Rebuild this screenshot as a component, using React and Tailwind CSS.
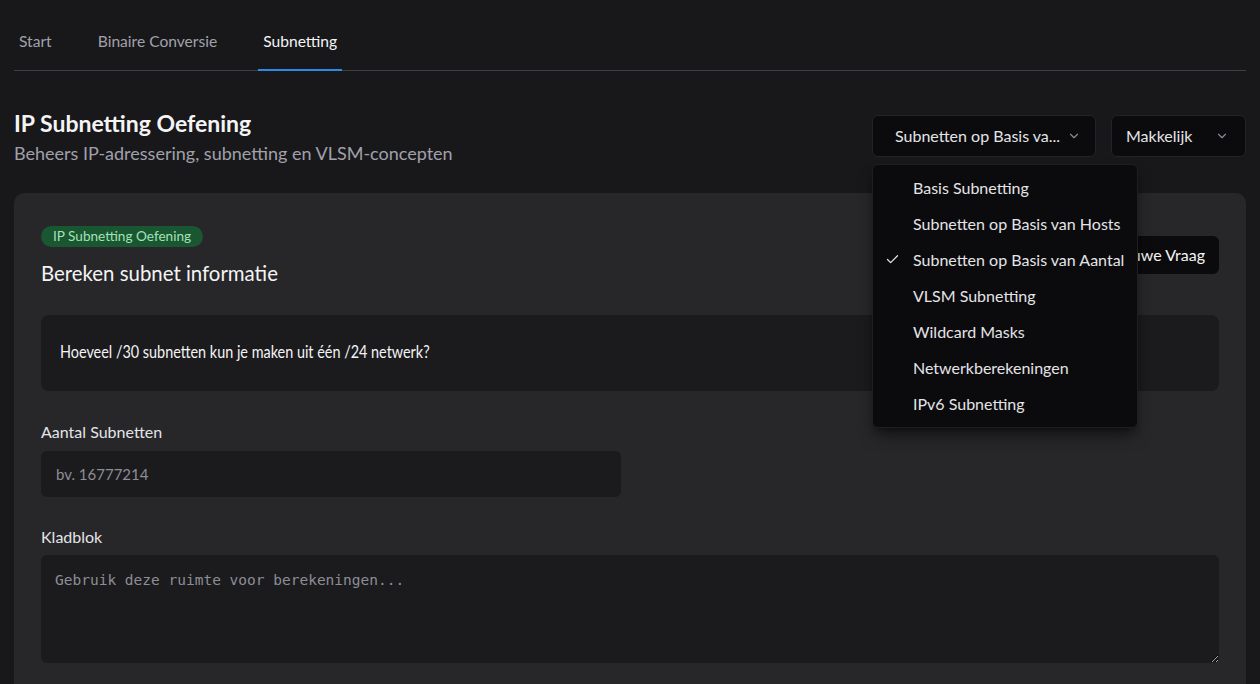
import React from "react";

const font = { fontFamily: "Lato, 'Noto Sans', sans-serif" };

function Chevron({ className = "" }) {
  return (
    <svg width="14" height="14" viewBox="0 0 24 24" fill="none" stroke="currentColor" strokeWidth="2" strokeLinecap="round" strokeLinejoin="round" className={className}>
      <path d="m6 9 6 6 6-6" />
    </svg>
  );
}

function Check() {
  return (
    <svg width="15" height="15" viewBox="0 0 24 24" fill="none" stroke="currentColor" strokeWidth="2" strokeLinecap="round" strokeLinejoin="round">
      <path d="M20 6 9 17l-5-5" />
    </svg>
  );
}

const items = [
  "Basis Subnetting",
  "Subnetten op Basis van Hosts",
  "Subnetten op Basis van Aantal",
  "VLSM Subnetting",
  "Wildcard Masks",
  "Netwerkberekeningen",
  "IPv6 Subnetting",
];

export default function App() {
  return (
    <div className="min-h-[684px] bg-[#18181b] text-[#f4f4f5] px-[14px]" style={font}>
      <nav className="flex gap-[36px] border-b border-[#3f3f46] pt-[30px]">
        <div className="px-[5px] pb-[18px] text-[15.6px] leading-[22px] text-[#a1a1aa]">Start</div>
        <div className="px-[5px] pb-[18px] text-[15.6px] leading-[22px] text-[#a1a1aa]">Binaire Conversie</div>
        <div className="-mb-px border-b-2 border-[#2b8ae8] px-[5px] pb-[17px] text-[15.6px] leading-[22px] text-[#f4f4f5]">Subnetting</div>
      </nav>

      <div className="mt-[38px] flex items-start justify-between">
        <div>
          <h1 className="text-[23px] font-bold leading-[28px] text-[#f4f4f5]">IP Subnetting Oefening</h1>
          <p className="mt-[2px] text-[18px] leading-[28px] text-[#a1a1aa]">Beheers IP-adressering, subnetting en VLSM-concepten</p>
        </div>
        <div className="relative mt-[6px] flex gap-[15px]">
          <button className="flex h-[42px] w-[224px] items-center justify-between rounded-md border border-[#232327] bg-[#0b0b0d] pl-[22px] pr-[14px] text-[16px] text-[#e4e4e7]">
            <span>Subnetten op Basis va...</span>
            <Chevron className="text-[#8a8a92]" />
          </button>
          <button className="flex h-[42px] w-[135px] items-center justify-between rounded-md border border-[#232327] bg-[#0b0b0d] pl-[14px] pr-[16px] text-[16px] text-[#e4e4e7]">
            <span>Makkelijk</span>
            <Chevron className="text-[#8a8a92]" />
          </button>

          <div className="absolute left-0 top-[49px] z-10 w-[266px] rounded-md border border-[#1f1f23] bg-[#0b0b0d] py-[5px] shadow-lg shadow-black/50">
            {items.map((it, i) => (
              <div key={it} className="relative flex h-9 items-center pl-[40px] text-[16px] text-[#e4e4e7]">
                {i === 2 && (
                  <span className="absolute left-[12px] top-[10px] text-[#e4e4e7]"><Check /></span>
                )}
                {it}
              </div>
            ))}
          </div>
        </div>
      </div>

      <div className="mt-[26px] rounded-[10px] bg-[#27272a] px-[27px] pb-[40px] pt-[30px]">
        <div className="flex items-center justify-between">
          <div>
            <span className="inline-block rounded-full bg-[#1a5632] px-[12px] py-[2px] text-[13.6px] leading-[17px] text-[#a3e2b6]">IP Subnetting Oefening</span>
            <h2 className="mt-[13px] text-[20.4px] leading-[26px] text-[#f4f4f5]">Bereken subnet informatie</h2>
          </div>
          <button className="h-[38px] rounded-md bg-[#0b0b0d] px-[14px] text-[16px] text-[#f4f4f5]">Nieuwe Vraag</button>
        </div>

        <div className="mt-[29px] rounded-lg bg-[#1b1b1e] px-[19px] pb-[26px] pt-[22px] text-[18px] leading-[28px] text-[#f4f4f5]">
          <span className="inline-block origin-left scale-x-[0.8] whitespace-nowrap">
            Hoeveel /30 subnetten kun je maken uit één /24 netwerk?
          </span>
        </div>

        <label className="mt-[30px] block text-[16px] leading-[22px] text-[#e4e4e7]">Aantal Subnetten</label>
        <input
          className="mt-[8px] block h-[46px] w-[580px] rounded-md bg-[#1b1b1e] px-[15px] text-[15px] text-[#f4f4f5] outline-none placeholder:text-[#8d8d96]"
          placeholder="bv. 16777214"
          style={font}
        />

        <label className="mt-[29px] block text-[16px] leading-[22px] text-[#e4e4e7]">Kladblok</label>
        <textarea
          className="mt-[7px] block h-[108px] w-full rounded-md bg-[#1b1b1e] px-[14px] pb-[12px] pt-[14px] text-[14.5px] leading-[22px] text-[#f4f4f5] outline-none placeholder:text-[#8d8d96]"
          placeholder="Gebruik deze ruimte voor berekeningen..."
          style={{ fontFamily: "'DejaVu Sans Mono', monospace" }}
        />
      </div>
    </div>
  );
}
